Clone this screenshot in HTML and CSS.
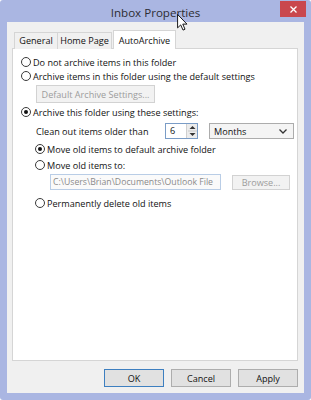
FILE: index.html
```html
<!DOCTYPE html>
<html lang="en">
<head>
  <meta charset="UTF-8">
  <title>Inbox Properties</title>
  <link rel="stylesheet" href="styles.css">
</head>
<body>
  <div class="window">
    <div class="titlebar">
      <span class="title">Inbox Properties</span>
      <button class="close" aria-label="Close">
        <svg width="7" height="7" viewBox="0 0 7 7"><path d="M0.5 0.5 L6.5 6.5 M6.5 0.5 L0.5 6.5" stroke="#fff" stroke-width="1.3"/></svg>
      </button>
      <svg class="cursor" width="11" height="17" viewBox="0 0 12 19">
        <path d="M0.5 0.5 L0.5 15.5 L4 12.2 L6.6 18 L8.8 17 L6.3 11.3 L11 11.3 Z" fill="#fff" stroke="#000" stroke-width="1"/>
      </svg>
    </div>

    <div class="client">
      <div class="tabs">
        <div class="tab tab-general">General</div>
        <div class="tab tab-home">Home Page</div>
        <div class="tab tab-archive active">AutoArchive</div>
      </div>

      <div class="panel">
        <label class="radio"><span class="dot"></span>Do not archive items in this folder</label>
        <label class="radio"><span class="dot"></span>Archive items in this folder using the default settings</label>
        <button class="btn btn-settings" disabled>Default Archive Settings...</button>
        <label class="radio row-own"><span class="dot checked"></span>Archive this folder using these settings:</label>

        <div class="clean-row">
          <span class="clean-label">Clean out items older than</span>
          <div class="spinner">
            <span class="spin-value">6</span>
            <span class="spin-btns">
              <svg width="9" height="14" viewBox="0 0 9 14">
                <path d="M1.5 5 L4.5 2 L7.5 5 Z" fill="#333"/>
                <path d="M1.5 9 L4.5 12 L7.5 9 Z" fill="#333"/>
                <path d="M0 7 H9" stroke="#c8c8c8"/>
              </svg>
            </span>
          </div>
          <div class="select">
            <span>Months</span>
            <svg width="8" height="5" viewBox="0 0 8 5"><path d="M0.5 0.5 L4 4 L7.5 0.5" fill="none" stroke="#333" stroke-width="1.3"/></svg>
          </div>
        </div>

        <label class="radio sub row-default"><span class="dot checked"></span>Move old items to default archive folder</label>
        <label class="radio sub row-move"><span class="dot"></span>Move old items to:</label>
        <div class="path-row">
          <span class="path-input">C:\Users\Brian\Documents\Outlook File</span>
          <button class="btn btn-browse" disabled>Browse...</button>
        </div>
        <label class="radio sub row-delete"><span class="dot"></span>Permanently delete old items</label>
      </div>

      <div class="actions">
        <button class="btn btn-action default">OK</button>
        <button class="btn btn-action">Cancel</button>
        <button class="btn btn-action">Apply</button>
      </div>
    </div>
  </div>
</body>
</html>
```

FILE: styles.css
```css
body {
  margin: 0;
  background: #ffffff;
  font-family: 'Open Sans', 'Noto Sans', sans-serif;
  font-size: 9.1px;
  color: #111;
}
.window {
  width: 311px;
  height: 400px;
  box-sizing: border-box;
  background: #aab6e2;
  border-radius: 3px;
  padding: 0 7px 7px 7px;
  display: flex;
  flex-direction: column;
}
.titlebar {
  position: relative;
  height: 23px;
  display: flex;
  align-items: center;
  justify-content: center;
}
.title {
  font-size: 11.6px;
  color: #2d2d33;
  margin-top: 3px;
}
.close {
  position: absolute;
  right: -2px;
  top: 1px;
  width: 26px;
  height: 16px;
  border: none;
  background: #c9474d;
  padding: 0;
  display: flex;
  align-items: center;
  justify-content: center;
}
.cursor {
  position: absolute;
  left: 170px;
  top: 14px;
}
.client {
  flex: 1;
  background: #f0f0f0;
  padding: 8px 6px 6px 5px;
  display: flex;
  flex-direction: column;
}
.tabs {
  display: flex;
  align-items: flex-end;
  height: 19px;
  padding-left: 2px;
  position: relative;
  z-index: 1;
  margin-bottom: -1px;
}
.tab {
  height: 17px;
  box-sizing: border-box;
  border: 1px solid #d5d5d5;
  border-bottom: none;
  border-right: none;
  background: #f0f0f0;
  text-align: center;
  line-height: 16px;
  font-size: 9.1px;
  white-space: nowrap;
}
.tab-general {
  width: 43px;
}
.tab-home {
  width: 55px;
  border-right: 1px solid #d5d5d5;
}
.tab-archive {
  width: 63px;
}
.tab.active {
  height: 19px;
  background: #ffffff;
  border-right: 1px solid #d5d5d5;
  margin-left: 1px;
  line-height: 19px;
}
.panel {
  height: 313px;
  box-sizing: border-box;
  background: #ffffff;
  border: 1px solid #d5d5d5;
  padding: 6px 8px 0 8px;
  display: flex;
  flex-direction: column;
  align-items: flex-start;
}
.radio {
  display: flex;
  align-items: center;
  gap: 2px;
  height: 14px;
  white-space: nowrap;
}
.dot {
  width: 8px;
  height: 8px;
  border: 1px solid #3a3a3a;
  border-radius: 50%;
  background: #fff;
  display: flex;
  align-items: center;
  justify-content: center;
}
.dot.checked::after {
  content: "";
  width: 4px;
  height: 4px;
  border-radius: 50%;
  background: #111;
}
.btn {
  font-family: inherit;
  font-size: 9.1px;
  background: #e1e1e1;
  border: 1px solid #adadad;
  color: #111;
  padding: 0;
}
.btn:disabled {
  background: #f2f2f2;
  border-color: #d2d2d2;
  color: #9c9c9c;
}
.btn-settings {
  margin: 2px 0 0 15px;
  width: 119px;
  height: 18px;
}
.row-own {
  margin-top: 2px;
}
.clean-row {
  display: flex;
  align-items: center;
  height: 16px;
  margin: 4px 0 0 15px;
}
.clean-label {
  width: 129px;
}
.spinner {
  display: flex;
  height: 16px;
  box-sizing: border-box;
  border: 1px solid #7a9cc6;
  background: #fff;
}
.spin-value {
  width: 20px;
  padding-left: 4px;
  box-sizing: border-box;
  line-height: 14px;
}
.spin-btns {
  width: 10px;
  border-left: 1px solid #d0d0d0;
  background: #ececec;
  display: flex;
  align-items: center;
  justify-content: center;
}
.select {
  margin-left: 11px;
  width: 85px;
  height: 16px;
  box-sizing: border-box;
  border: 1px solid #acacac;
  background: #f4f4f4;
  display: flex;
  align-items: center;
  justify-content: space-between;
  padding: 0 6px 0 4px;
}
.radio.sub {
  margin-left: 14px;
}
.row-default {
  margin-top: 3px;
}
.row-move {
  margin-top: 2px;
}
.path-row {
  display: flex;
  align-items: center;
  margin: 2px 0 0 29px;
  gap: 11px;
}
.path-input {
  width: 171px;
  height: 16px;
  box-sizing: border-box;
  border: 1px solid #b9cde6;
  background: #fafafa;
  color: #8a8a8a;
  padding-left: 2px;
  font-size: 8.7px;
  line-height: 14px;
  white-space: nowrap;
}
.btn-browse {
  width: 58px;
  height: 15px;
}
.row-delete {
  margin-top: 6px;
}
.actions {
  display: flex;
  justify-content: flex-end;
  gap: 7px;
  margin-top: 8px;
}
.btn-action {
  width: 60px;
  height: 18px;
}
.btn-action.default {
  border-color: #3d7fc0;
}
```
